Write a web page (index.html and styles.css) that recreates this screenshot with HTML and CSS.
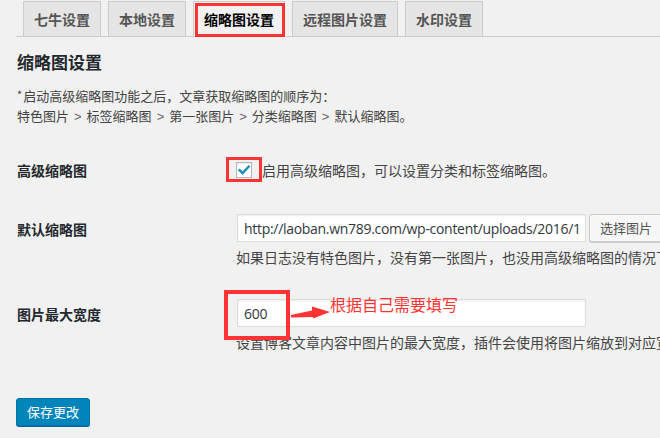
FILE: index.html
```
<!DOCTYPE html>
<html lang="zh-CN">
<head>
<meta charset="utf-8">
<title>缩略图设置</title>
<link rel="stylesheet" href="styles.css">
</head>
<body>
<nav class="tabs">
  <a class="tab">七牛设置</a>
  <a class="tab">本地设置</a>
  <a class="tab tab-active">缩略图设置<span class="mark mark-tab"></span></a>
  <a class="tab">远程图片设置</a>
  <a class="tab">水印设置</a>
</nav>

<h2 class="title">缩略图设置</h2>
<p class="intro"><span class="star">*</span>启动高级缩略图功能之后，文章获取缩略图的顺序为：<br>特色图片<span class="gt">&gt;</span>标签缩略图<span class="gt">&gt;</span>第一张图片<span class="gt">&gt;</span>分类缩略图<span class="gt">&gt;</span>默认缩略图。</p>

<div class="row row-check">
  <div class="label">高级缩略图</div>
  <div class="field field-check">
    <span class="checkbox">
      <svg width="14" height="14" viewBox="0 0 14 14"><path d="M2.6 7.2 L5.6 10.2 L11.6 3.6" fill="none" stroke="#1e8cbe" stroke-width="2.4" stroke-linecap="square"/></svg>
      <span class="mark mark-check"></span>
    </span>
    <span class="check-text">启用高级缩略图，可以设置分类和标签缩略图。</span>
  </div>
</div>

<div class="row row-url">
  <div class="label label-tall">默认缩略图</div>
  <div class="field">
    <div class="inline">
      <input class="text-input" type="text" value="http://laoban.wn789.com/wp-content/uploads/2016/11/thumbnail.png" readonly>
      <span class="btn">选择图片</span>
    </div>
    <p class="hint">如果日志没有特色图片，没有第一张图片，也没用高级缩略图的情况下所使用的默认缩略图。</p>
  </div>
</div>

<div class="row row-width">
  <div class="label label-tall">图片最大宽度</div>
  <div class="field">
    <div class="inline anchor">
      <input class="text-input" type="text" value="600" readonly>
      <span class="mark mark-input"></span>
      <svg class="arrow" width="42" height="16" viewBox="0 0 42 16"><polygon points="1,10 22,5.5 22,1.5 40,7 23,13.5 23,12 1,12.5" fill="#f33"/></svg>
      <span class="note">根据自己需要填写</span>
    </div>
    <p class="hint">设置博客文章内容中图片的最大宽度，插件会使用将图片缩放到对应宽度。</p>
  </div>
</div>

<div class="actions">
  <span class="primary">保存更改</span>
</div>
</body>
</html>
```
FILE: styles.css
```
html, body {
  margin: 0;
  padding: 0;
}
body {
  width: 660px;
  height: 438px;
  overflow: hidden;
  background: #f1f1f1;
  color: #444;
  font-family: "Noto Sans CJK SC", "Noto Sans", sans-serif;
  font-size: 13px;
}

.tabs {
  display: flex;
  gap: 7px;
  margin-left: 16px;
  padding: 1px 0 0 7px;
  border-bottom: 1px solid #ccc;
}
.tab {
  position: relative;
  display: block;
  padding: 5px 10px;
  line-height: 24px;
  font-size: 14px;
  font-weight: 700;
  color: #555;
  background: #e5e5e5;
  border: 1px solid #ccc;
  border-bottom: 0;
  white-space: nowrap;
}
.tab-active {
  background: #f1f1f1;
  color: #000;
}

.mark {
  position: absolute;
  box-sizing: border-box;
  border: 3px solid #f33;
}
.mark-tab {
  left: 1px;
  right: -1px;
  top: 1px;
  bottom: -1px;
}

.title {
  margin: 14px 0 0 17px;
  font-size: 17px;
  line-height: 22px;
  font-weight: 700;
  color: #23282d;
}

.intro {
  margin: 13px 0 0 17px;
  line-height: 20px;
  font-size: 13px;
  color: #444;
  white-space: nowrap;
}
.star {
  position: relative;
  top: -2px;
  font-size: 11px;
  line-height: 0;
  margin-right: 1px;
}
.gt {
  display: inline-block;
  margin: 0 5px;
  font-family: "Liberation Sans", sans-serif;
  color: #666;
}

.row {
  display: flex;
  align-items: flex-start;
  white-space: nowrap;
}
.label {
  box-sizing: border-box;
  flex: 0 0 237px;
  padding-left: 17px;
  font-size: 14px;
  font-weight: 700;
  line-height: 28px;
  color: #23282d;
}
.label-tall {
  line-height: 30px;
}

.row-check {
  margin-top: 29px;
  align-items: center;
}
.field-check {
  display: flex;
  align-items: center;
  height: 28px;
}
.checkbox {
  position: relative;
  box-sizing: border-box;
  width: 16px;
  height: 16px;
  margin-left: -1px;
  background: #fff;
  border: 1px solid #b4b9be;
  box-shadow: inset 0 1px 2px rgba(0, 0, 0, 0.1);
  display: flex;
  align-items: center;
  justify-content: center;
}
.mark-check {
  left: -11px;
  right: -11px;
  top: -6px;
  bottom: -5px;
}
.check-text {
  margin-left: 10px;
  line-height: 28px;
  font-size: 14px;
}

.row-url {
  margin-top: 30px;
}
.row-width {
  margin-top: 32px;
}

.inline {
  display: flex;
  align-items: flex-start;
}
.anchor {
  position: relative;
}
.text-input {
  box-sizing: border-box;
  width: 349px;
  height: 28px;
  margin: 0;
  padding: 0 6px;
  border: 1px solid #ddd;
  background: #fff;
  box-shadow: inset 0 1px 2px rgba(0, 0, 0, 0.07);
  font-family: "Open Sans", "Noto Sans", sans-serif;
  font-size: 14px;
  letter-spacing: -0.3px;
  color: #32373c;
  outline: none;
}
.btn {
  box-sizing: border-box;
  height: 28px;
  margin-left: 3px;
  padding: 0 10px;
  line-height: 26px;
  border: 1px solid #ccc;
  border-radius: 3px;
  background: #f7f7f7;
  box-shadow: 0 1px 0 #ccc;
  color: #555;
  font-size: 13px;
}

.hint {
  margin: 6px 0 0 -1px;
  line-height: 19px;
  font-size: 14px;
  color: #444;
}

.mark-input {
  left: -13px;
  top: -9px;
  width: 66px;
  height: 50px;
  border-width: 4px;
}
.arrow {
  position: absolute;
  left: 53px;
  top: 6px;
}
.note {
  position: absolute;
  left: 93px;
  top: -6px;
  font-size: 16px;
  line-height: 22px;
  color: #f33;
}

.actions {
  margin: 46px 0 0 16px;
}
.primary {
  display: inline-block;
  box-sizing: border-box;
  height: 28px;
  padding: 0 10px;
  line-height: 26px;
  font-size: 13px;
  color: #fff;
  background: #0085ba;
  border: 1px solid #0073aa;
  border-radius: 3px;
  box-shadow: 0 1px 0 #006799;
}
```
